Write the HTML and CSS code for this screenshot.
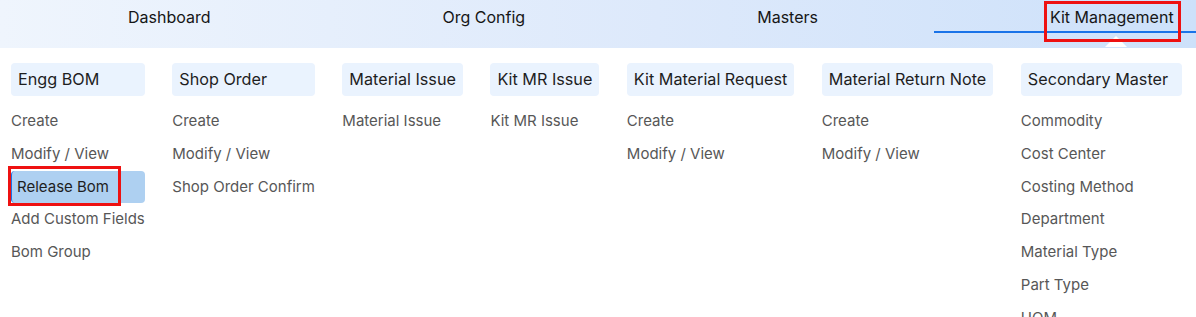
FILE: index.html
```html
<!DOCTYPE html>
<html lang="en">
<head>
<meta charset="utf-8">
<title>Kit Management</title>
<link rel="stylesheet" href="styles.css">
</head>
<body>
<header class="topbar">
  <nav class="tabs">
    <a class="tab">Dashboard</a>
    <a class="tab">Org Config</a>
    <a class="tab">Masters</a>
    <a class="tab active"><span class="tab-label annotated annotated-tab">Kit Management</span></a>
  </nav>
</header>
<main class="mega">
  <section class="col">
    <h3 class="col-title">Engg BOM</h3>
    <ul class="col-list">
      <li class="item">Create</li>
      <li class="item">Modify / View</li>
      <li class="item selected"><span class="annotated annotated-item">Release Bom</span></li>
      <li class="item">Add Custom Fields</li>
      <li class="item">Bom Group</li>
    </ul>
  </section>
  <section class="col">
    <h3 class="col-title">Shop Order</h3>
    <ul class="col-list">
      <li class="item">Create</li>
      <li class="item">Modify / View</li>
      <li class="item">Shop Order Confirm</li>
    </ul>
  </section>
  <section class="col">
    <h3 class="col-title">Material Issue</h3>
    <ul class="col-list">
      <li class="item">Material Issue</li>
    </ul>
  </section>
  <section class="col">
    <h3 class="col-title">Kit MR Issue</h3>
    <ul class="col-list">
      <li class="item">Kit MR Issue</li>
    </ul>
  </section>
  <section class="col">
    <h3 class="col-title">Kit Material Request</h3>
    <ul class="col-list">
      <li class="item">Create</li>
      <li class="item">Modify / View</li>
    </ul>
  </section>
  <section class="col">
    <h3 class="col-title">Material Return Note</h3>
    <ul class="col-list">
      <li class="item">Create</li>
      <li class="item">Modify / View</li>
    </ul>
  </section>
  <section class="col col-wide">
    <h3 class="col-title">Secondary Master</h3>
    <ul class="col-list">
      <li class="item">Commodity</li>
      <li class="item">Cost Center</li>
      <li class="item">Costing Method</li>
      <li class="item">Department</li>
      <li class="item">Material Type</li>
      <li class="item">Part Type</li>
      <li class="item">UOM</li>
    </ul>
  </section>
</main>
</body>
</html>
```
FILE: styles.css
```css
* { box-sizing: border-box; }

html, body {
  margin: 0;
  padding: 0;
  background: #ffffff;
  font-family: Inter, "Noto Sans", "Liberation Sans", sans-serif;
  overflow: hidden;
}

.topbar {
  height: 48px;
  background: linear-gradient(90deg, #eff5fd 0%, #dde9fb 55%, #cde1fa 100%);
  overflow: hidden;
}

.tabs {
  display: flex;
  padding-left: 12px;
  white-space: nowrap;
}

.tab {
  flex: none;
  position: relative;
  height: 33px;
  padding: 8px 116px 0;
  font-size: 16px;
  line-height: 18px;
  color: #161616;
  border-bottom: 2px solid transparent;
  text-decoration: none;
}

.tab.active {
  border-bottom-color: #1a73e8;
}

.tab-label {
  position: relative;
  display: inline-block;
}

.tab.active .tab-label::before {
  content: "";
  position: absolute;
  top: 28px;
  left: 50%;
  margin-left: -7px;
  width: 0;
  height: 0;
  border-left: 11px solid transparent;
  border-right: 11px solid transparent;
  border-bottom: 11px solid #ffffff;
}

.annotated {
  position: relative;
}

.annotated::after {
  content: "";
  position: absolute;
  border: 3px solid #ee1111;
  pointer-events: none;
}

.annotated-tab::after {
  top: -7px;
  bottom: -16px;
  left: -6px;
  right: -7px;
}

.mega {
  display: flex;
  align-items: flex-start;
  gap: 27.5px;
  padding: 15px 0 0 11px;
}

.col {
  flex: none;
  display: flex;
  flex-direction: column;
}

.col-wide {
  min-width: 161px;
}

.col-title {
  margin: 0 0 9px;
  padding: 0 7px;
  height: 33px;
  line-height: 33px;
  font-size: 16.2px;
  font-weight: 400;
  color: #1e1e1e;
  background: #eaf3fe;
  border-radius: 4px;
  white-space: nowrap;
}

.col-list {
  list-style: none;
  margin: 0;
  padding: 0;
}

.item {
  height: 32px;
  margin-bottom: 0.8px;
  line-height: 32px;
  font-size: 15px;
  color: #575757;
  white-space: nowrap;
}

.item.selected {
  padding-left: 5px;
  color: #1e1e1e;
  background: #aed0f1;
  border-radius: 4px;
  border-left: 1px solid #1a73e8;
}

.annotated-item {
  display: inline-block;
  line-height: 18px;
}

.annotated-item::after {
  top: -12px;
  bottom: -10px;
  left: -9px;
  right: -12px;
}
```
